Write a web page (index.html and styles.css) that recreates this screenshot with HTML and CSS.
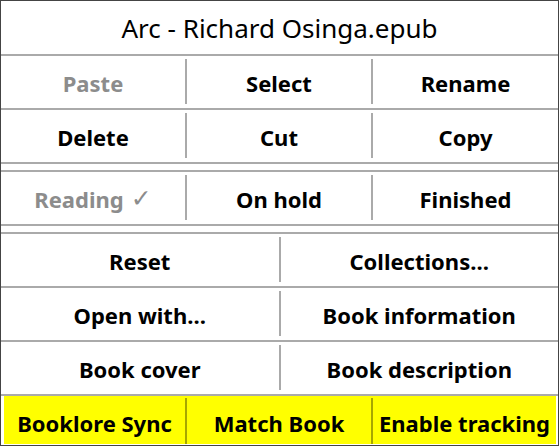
FILE: index.html
```html
<!DOCTYPE html>
<html>
<head>
<meta charset="utf-8">
<link rel="stylesheet" href="styles.css">
</head>
<body>
<div class="dialog">
  <div class="title">Arc - Richard Osinga.epub</div>
  <div class="hr"></div>
  <div class="row three">
    <div class="btn disabled">Paste</div><div class="vsep"></div>
    <div class="btn">Select</div><div class="vsep"></div>
    <div class="btn">Rename</div>
  </div>
  <div class="hr"></div>
  <div class="row three">
    <div class="btn">Delete</div><div class="vsep"></div>
    <div class="btn">Cut</div><div class="vsep"></div>
    <div class="btn">Copy</div>
  </div>
  <div class="hr"></div>
  <div class="gap"></div>
  <div class="hr"></div>
  <div class="row three">
    <div class="btn disabled">Reading <span class="check">✓</span></div><div class="vsep"></div>
    <div class="btn">On hold</div><div class="vsep"></div>
    <div class="btn">Finished</div>
  </div>
  <div class="hr"></div>
  <div class="gap"></div>
  <div class="hr"></div>
  <div class="row two">
    <div class="btn">Reset</div><div class="vsep"></div>
    <div class="btn">Collections…</div>
  </div>
  <div class="hr"></div>
  <div class="row two">
    <div class="btn">Open with…</div><div class="vsep"></div>
    <div class="btn">Book information</div>
  </div>
  <div class="hr"></div>
  <div class="row two">
    <div class="btn">Book cover</div><div class="vsep"></div>
    <div class="btn">Book description</div>
  </div>
  <div class="hr"></div>
  <div class="footer">
    <div class="row yellow">
      <div class="btn">Booklore Sync</div><div class="vsep ysep"></div>
      <div class="btn">Match Book</div><div class="vsep ysep"></div>
      <div class="btn">Enable tracking</div>
    </div>
  </div>
</div>
</body>
</html>
```

FILE: styles.css
```css
html, body {
  margin: 0;
  padding: 0;
  background: #fff;
}
.dialog {
  width: 559px;
  height: 446px;
  box-sizing: border-box;
  border: 1px solid #444;
  display: flex;
  flex-direction: column;
  font-family: "Noto Sans", "DejaVu Sans", sans-serif;
  color: #000;
}
.title {
  height: 53px;
  display: flex;
  align-items: center;
  justify-content: center;
  font-size: 26px;
  font-weight: 400;
  padding-top: 1px;
  box-sizing: border-box;
}
.hr {
  height: 2px;
  background: #aaa;
  flex: none;
}
.gap {
  height: 6px;
  flex: none;
}
.row {
  height: 52px;
  display: grid;
  flex: none;
}
.three {
  grid-template-columns: 184px 2px 184px 2px 185px;
}
.two {
  grid-template-columns: 1fr 2px 1fr;
}
.btn {
  display: flex;
  align-items: center;
  justify-content: center;
  font-size: 22px;
  font-weight: 700;
  white-space: nowrap;
  padding-top: 1px;
}
.disabled {
  color: #8c8c8c;
}
.check {
  font-weight: 400;
  margin-left: 7px;
  font-family: "DejaVu Sans", sans-serif;
  font-size: 25px;
  line-height: 1;
}
.vsep {
  background: #aaa;
  margin: 3px 0 4px;
}
.footer {
  height: 48px;
  padding: 0 2px 0 3px;
}
.yellow {
  height: 48px;
  background: #ffff00;
  grid-template-columns: 181px 2px 184px 2px 183px;
}
.yellow .btn {
  padding-top: 5px;
}
.ysep {
  background: #a6a600;
  margin: 2px 0 0;
}
```
